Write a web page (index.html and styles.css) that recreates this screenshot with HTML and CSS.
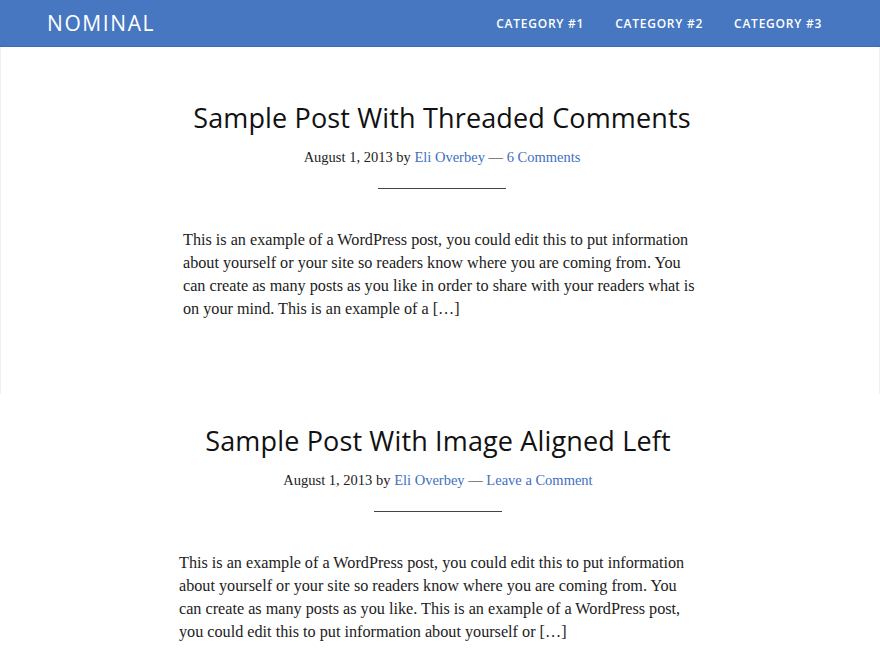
FILE: index.html
```html
<!DOCTYPE html>
<html>
<head>
<meta charset="utf-8">
<link rel="stylesheet" href="styles.css">
</head>
<body>
<header class="site-header">
  <a class="logo" href="#">NOMINAL</a>
  <nav class="nav">
    <a href="#">CATEGORY #1</a>
    <a href="#">CATEGORY #2</a>
    <a href="#">CATEGORY #3</a>
  </nav>
</header>
<main>
  <article class="post post-first">
    <h2 class="post-title">Sample Post With Threaded Comments</h2>
    <p class="meta">August 1, 2013 by <a href="#">Eli Overbey</a> — <a href="#">6 Comments</a></p>
    <hr class="divider">
    <p class="excerpt">This is an example of a WordPress post, you could edit this to put information about yourself or your site so readers know where you are coming from. You can create as many posts as you like in order to share with your readers what is on your mind. This is an example of a […]</p>
  </article>
  <article class="post post-second">
    <h2 class="post-title">Sample Post With Image Aligned Left</h2>
    <p class="meta">August 1, 2013 by <a href="#">Eli Overbey</a> — <a href="#">Leave a Comment</a></p>
    <hr class="divider">
    <p class="excerpt">This is an example of a WordPress post, you could edit this to put information about yourself or your site so readers know where you are coming from. You can create as many posts as you like. This is an example of a WordPress post, you could edit this to put information about yourself or […]</p>
  </article>
</main>
</body>
</html>
```
FILE: styles.css
```css
* { box-sizing: border-box; }
html, body { margin: 0; padding: 0; background: #fff; }
body { font-family: "Liberation Serif", serif; color: #222; overflow: hidden; }
a { text-decoration: none; }

.site-header {
  height: 47px;
  background: #4677c0;
  border-bottom: 1px solid #3e6cb3;
  display: flex;
  align-items: center;
  justify-content: space-between;
  padding: 0 58px 0 47px;
}
.logo {
  color: #fff;
  font-family: "Open Sans", sans-serif;
  font-size: 21px;
  letter-spacing: 1.6px;
  font-weight: 400;
}
.nav { display: flex; gap: 31px; }
.nav a {
  color: #fff;
  font-family: "Open Sans", sans-serif;
  font-size: 12px;
  font-weight: 600;
  letter-spacing: 0.75px;
}

.post { text-align: center; }
.post-first {
  border-left: 1px solid #f0f0f0;
  border-right: 1px solid #f0f0f0;
  padding: 53px 0 73px 4px;
}
.post-second { padding: 29px 4px 0 0; }

.post-title {
  margin: 0;
  font-family: "Open Sans", sans-serif;
  font-weight: 400;
  font-size: 27px;
  letter-spacing: 0.15px;
  line-height: 36px;
  color: #111;
}
.meta {
  margin: 10px 0 0;
  font-size: 14.5px;
  line-height: 22px;
  color: #222;
}
.meta a { color: #3f6fbf; }
.divider {
  width: 128px;
  margin: 20px auto 0;
  border: 0;
  border-top: 1px solid #444;
}
.excerpt {
  width: 518px;
  margin: 40px auto 0;
  text-align: left;
  font-size: 16.2px;
  line-height: 23px;
  color: #222;
}
```
